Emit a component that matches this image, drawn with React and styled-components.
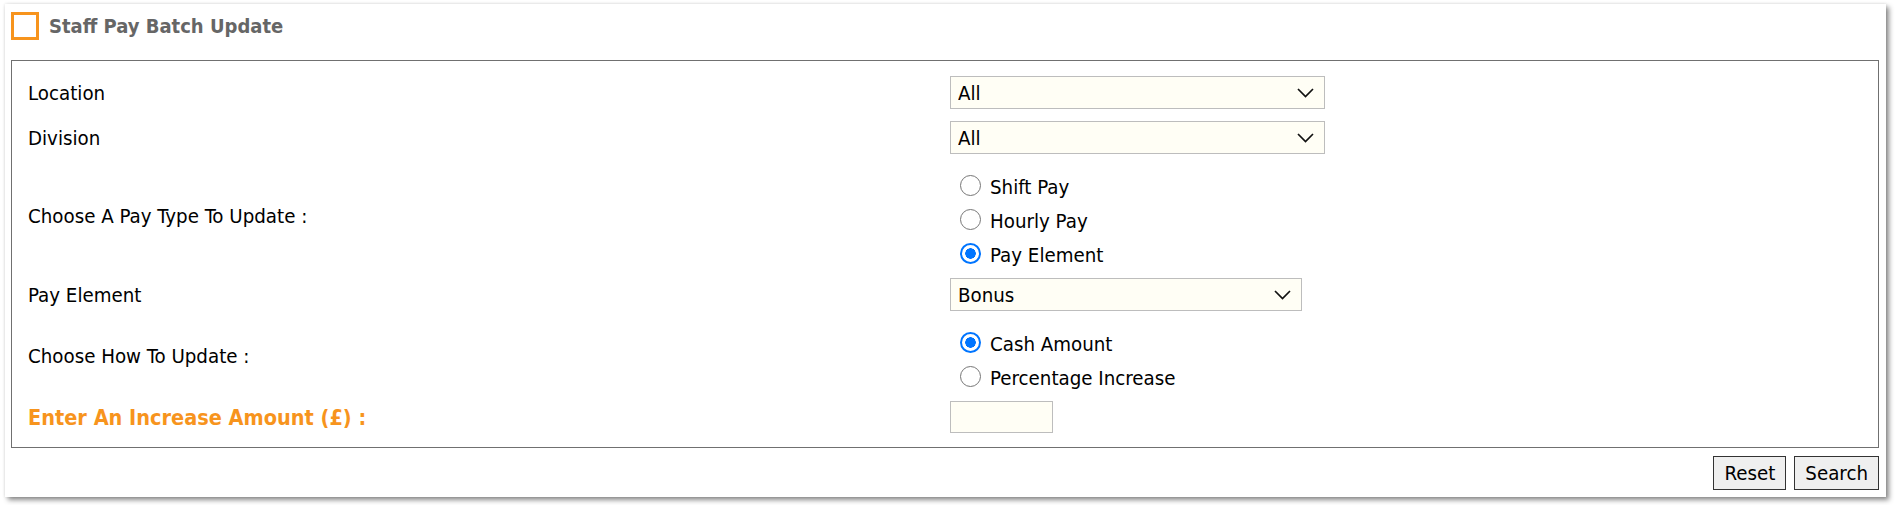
import React from 'react';
import styled, { createGlobalStyle } from 'styled-components';

const GlobalStyle = createGlobalStyle`
  body {
    margin: 0;
    background: #fff;
    font-family: "DejaVu Sans Condensed", "DejaVu Sans", sans-serif;
  }
`;

const Page = styled.div`
  padding: 4px 9px 10px 5px;
`;

const Card = styled.div`
  background: #fff;
  padding: 8px 7px 7px 6px;
  box-shadow: 3px 3px 5px rgba(0, 0, 0, 0.45), 0 0 3px rgba(0, 0, 0, 0.12);
`;

const Header = styled.div`
  display: flex;
  align-items: center;
  gap: 10px;
  margin-bottom: 20px;
`;

const HeaderIcon = styled.span`
  width: 22px;
  height: 22px;
  border: 3px solid #f7941d;
  display: inline-block;
`;

const Title = styled.h1`
  margin: 0;
  font-size: 20px;
  font-weight: bold;
  color: #666;
`;

const FormBox = styled.div`
  border: 1px solid #707070;
  padding: 9px 16px 8px 16px;
  display: grid;
  grid-template-columns: 1fr 1fr;
  column-gap: 10px;
`;

const Label = styled.div`
  display: flex;
  align-items: center;
  font-size: ${(p) => (p.$accent ? '21.5px' : '20.3px')};
  color: ${(p) => (p.$accent ? '#f7941d' : '#000')};
  font-weight: ${(p) => (p.$accent ? 'bold' : 'normal')};
`;

const Cell = styled.div`
  padding: ${(p) => (p.$radios ? '10px 0 0 0' : '6px 0')};
`;

const SelectWrap = styled.div`
  position: relative;
  width: ${(p) => p.$width}px;
  height: 33px;
`;

const Select = styled.select`
  appearance: none;
  width: 100%;
  height: 100%;
  box-sizing: border-box;
  border: 1px solid #bdbdbd;
  background: #fffef5;
  padding: 0 30px 0 7px;
  font-family: inherit;
  font-size: 20.3px;
  color: #000;
  outline: none;
`;

const Chevron = styled.svg`
  position: absolute;
  right: 11px;
  top: 12px;
  pointer-events: none;
`;

const RadioLine = styled.label`
  display: flex;
  align-items: center;
  height: 34px;
  padding-left: 10px;
  font-size: 20.3px;
  color: #000;
`;

const Radio = styled.input.attrs({ type: 'radio' })`
  appearance: none;
  width: 21px;
  height: 21px;
  margin: 0 9px 4px 0;
  border-radius: 50%;
  box-sizing: border-box;
  border: 1.5px solid #767676;
  background: #fff;

  &:checked {
    border: 2px solid #0075ff;
    background: radial-gradient(circle, #0075ff 0 5px, #fff 5.5px);
  }
`;

const AmountInput = styled.input`
  width: 103px;
  height: 32px;
  box-sizing: border-box;
  border: 1px solid #bdbdbd;
  background: #fffef5;
  outline: none;
`;

const Actions = styled.div`
  display: flex;
  justify-content: flex-end;
  gap: 8px;
  margin-top: 8px;
`;

const Button = styled.button`
  height: 34px;
  padding: 0 10px;
  font-family: inherit;
  font-size: 20.3px;
  color: #000;
  background: #efefef;
  border: 1px solid #333;
`;

const Dropdown = ({ value, width }) => (
  <SelectWrap $width={width}>
    <Select defaultValue={value}>
      <option>{value}</option>
    </Select>
    <Chevron width="17" height="10" viewBox="0 0 17 10">
      <polyline points="1,1 8.5,8.5 16,1" fill="none" stroke="#111" strokeWidth="1.7" />
    </Chevron>
  </SelectWrap>
);

const App = () => {
  return (
    <Page>
      <GlobalStyle />
      <Card>
        <Header>
          <HeaderIcon />
          <Title>Staff Pay Batch Update</Title>
        </Header>
        <FormBox>
          <Label>Location</Label>
          <Cell>
            <Dropdown value="All" width={375} />
          </Cell>

          <Label>Division</Label>
          <Cell>
            <Dropdown value="All" width={375} />
          </Cell>

          <Label>Choose A Pay Type To Update :</Label>
          <Cell $radios>
            <RadioLine>
              <Radio name="payType" />
              Shift Pay
            </RadioLine>
            <RadioLine>
              <Radio name="payType" />
              Hourly Pay
            </RadioLine>
            <RadioLine>
              <Radio name="payType" defaultChecked />
              Pay Element
            </RadioLine>
          </Cell>

          <Label>Pay Element</Label>
          <Cell>
            <Dropdown value="Bonus" width={352} />
          </Cell>

          <Label>Choose How To Update :</Label>
          <Cell $radios>
            <RadioLine>
              <Radio name="how" defaultChecked />
              Cash Amount
            </RadioLine>
            <RadioLine>
              <Radio name="how" />
              Percentage Increase
            </RadioLine>
          </Cell>

          <Label $accent>Enter An Increase Amount (£) :</Label>
          <Cell>
            <AmountInput />
          </Cell>
        </FormBox>
        <Actions>
          <Button>Reset</Button>
          <Button>Search</Button>
        </Actions>
      </Card>
    </Page>
  );
};

export default App;
